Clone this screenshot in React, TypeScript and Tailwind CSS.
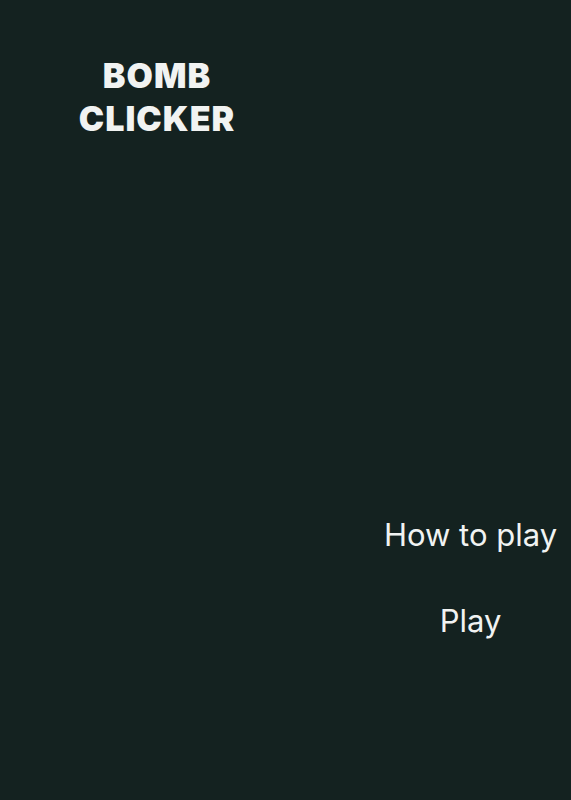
export default function App() {
  return (
    <div className="flex min-h-[800px] flex-col bg-[#142220] text-[#f1f3f2] font-['Inter',sans-serif]">
      <header className="w-[314px] pt-[54px] text-center">
        <h1 className="text-[34px] font-black uppercase leading-[43px] tracking-[0.03em]">
          Bomb
          <br />
          Clicker
        </h1>
      </header>
      <nav className="ml-auto mt-[375px] flex w-[200px] flex-col items-center gap-[46px] pr-[1px]">
        <button className="text-[31px] leading-[40px]">How to play</button>
        <button className="text-[31px] leading-[40px]">Play</button>
      </nav>
    </div>
  );
}
